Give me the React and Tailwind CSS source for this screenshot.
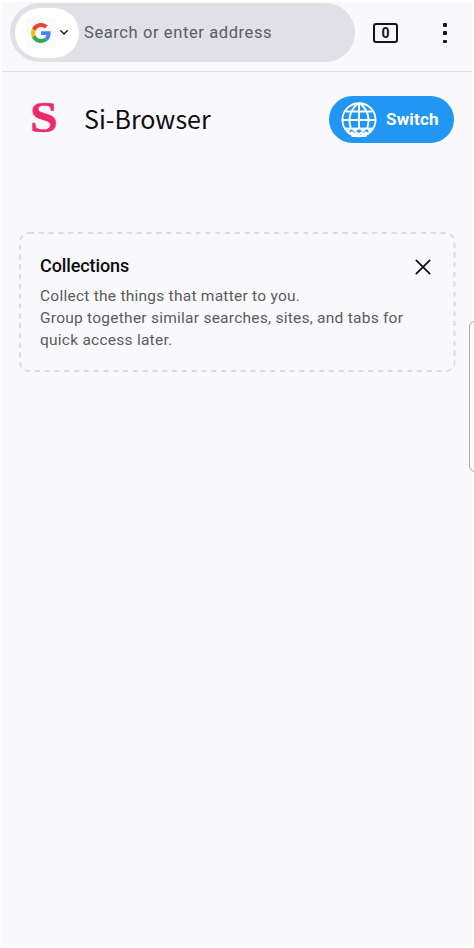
import { useState } from 'react';

const GoogleLogo = ({ className }) => (
  <svg viewBox="0 0 48 48" className={className} aria-hidden="true">
    <path fill="#EA4335" d="M24 9.5c3.54 0 6.71 1.22 9.21 3.6l6.85-6.85C35.9 2.38 30.47 0 24 0 14.62 0 6.51 5.38 2.56 13.22l7.98 6.19C12.43 13.72 17.74 9.5 24 9.5z" />
    <path fill="#4285F4" d="M46.98 24.55c0-1.57-.15-3.09-.38-4.55H24v9.02h12.94c-.58 2.96-2.26 5.48-4.78 7.18l7.73 6c4.51-4.18 7.09-10.36 7.09-17.65z" />
    <path fill="#FBBC05" d="M10.53 28.59c-.48-1.45-.76-2.99-.76-4.59s.27-3.14.76-4.59l-7.98-6.19C.92 16.46 0 20.12 0 24c0 3.88.92 7.54 2.56 10.78l7.97-6.19z" />
    <path fill="#34A853" d="M24 48c6.48 0 11.93-2.13 15.89-5.81l-7.73-6c-2.15 1.45-4.92 2.3-8.16 2.3-6.26 0-11.57-4.22-13.47-9.91l-7.98 6.19C6.51 42.62 14.62 48 24 48z" />
  </svg>
);

const GlobeLogo = ({ className }) => (
  <svg viewBox="0 0 36 36" fill="none" stroke="currentColor" strokeWidth="1.9" className={className} aria-hidden="true">
    <circle cx="18" cy="17.8" r="16.6" />
    <path d="M18 1.4V26M16.5 1.8C7.5 10 7.5 19 9.8 26M19.5 1.8C28.5 10 28.5 19 26.2 26M5 9.5h26M1.4 18h33.2" />
    {/* Small figures along the bottom of the globe */}
    <path strokeWidth="2" d="M3.5 26.6h29" />
    <path strokeWidth="2.2" d="M6.5 27.5l2 2M12 27l2 2.4 2-2.4M20 27l2 2.4 2-2.4M29.5 27.5l-2 2" />
    <path strokeWidth="2.2" d="M8 32l3-1.5 2.5 2 2.5-1.5 2 1.5 2-1.5 2.5 1.5 2.5-2 3 1.5" />
    <path strokeWidth="2" d="M10.5 34h15" />
  </svg>
);

const Toolbar = () => (
  <header className="flex h-[70px] items-start border-b-[1.5px] border-[#e2e2e5] pt-px pl-2">
    <div className="flex h-[59px] w-[345px] shrink-0 items-center rounded-full bg-[#e0e0e6] pl-[5px]">
      <button className="flex h-[50px] w-16 shrink-0 items-center rounded-full bg-white pl-[11px]" aria-label="Search engine">
        <span className="flex h-[30px] w-[30px] items-center justify-center bg-[#fafafb]">
          <GoogleLogo className="h-5 w-5" />
        </span>
        <svg viewBox="0 0 8 5" className="ml-1 h-[5px] w-2" fill="none" stroke="#15141a" strokeWidth="1.4" strokeLinecap="round" strokeLinejoin="round">
          <path d="M0.8 0.8L4 3.9L7.2 0.8" />
        </svg>
      </button>
      <span className="ml-[5px] text-[16.5px] leading-6 tracking-[0.6px] whitespace-nowrap text-[#5b5b66]">
        Search or enter address
      </span>
    </div>
    <button className="mt-5 ml-[18px] flex h-5 w-[25px] items-center justify-center rounded-[3px] border-2 border-[#15141a] text-[14px] leading-none font-bold text-[#15141a]" aria-label="Tabs">
      <span className="-mt-px">0</span>
    </button>
    <button className="mt-5 ml-[45px] flex h-5 w-1 flex-col justify-between" aria-label="Menu">
      <span className="h-[3.5px] w-[3.5px] rounded-[1px] bg-[#15141a]"></span>
      <span className="h-[3.5px] w-[3.5px] rounded-[1px] bg-[#15141a]"></span>
      <span className="h-[3.5px] w-[3.5px] rounded-[1px] bg-[#15141a]"></span>
    </button>
  </header>
);

const Brand = () => (
  <div className="mt-6 flex h-[47px] items-center pr-[18px] pl-7">
    <span className="mb-[3px] w-[54px] origin-left scale-x-[1.14] font-['Liberation_Serif',serif] text-[44px] leading-[44px] font-bold text-[#ee2a6b] [-webkit-text-stroke:0.5px_#ee2a6b]">S</span>
    <h1 className="mb-[3px] flex-1 font-['Noto_Sans_CJK_SC',sans-serif] text-[25px] leading-[44px] whitespace-nowrap text-[#0c0c10]">
      Si-Browser
    </h1>
    <button className="flex h-[47px] w-[125px] items-center rounded-full bg-[#2196f3] pl-3 text-white">
      <GlobeLogo className="h-9 w-9 shrink-0" />
      <span className="ml-[9px] text-[17px] font-bold tracking-[0.2px]">Switch</span>
    </button>
  </div>
);

const Collections = ({ onClose }) => (
  <section className="relative mt-[88px] mr-[16px] ml-4 h-[141px] pt-[23px] pr-[25px] pl-[22px]">
    <svg className="pointer-events-none absolute inset-0 h-full w-full" aria-hidden="true">
      <rect x="2" y="2" width="434.5" height="138" rx="9" fill="none" stroke="#dcdcde" strokeWidth="2" strokeDasharray="5 4.8" />
    </svg>
    <div className="flex items-center justify-between">
      <h2 className="text-[18px] leading-6 font-medium tracking-[-0.1px] text-[#0c0c10]">Collections</h2>
      <button onClick={onClose} aria-label="Close" className="mt-px">
        <svg viewBox="0 0 16 16" className="h-4 w-4" fill="none" stroke="#0c0c10" strokeWidth="1.7" strokeLinecap="round">
          <path d="M1.3 1.3L14.7 14.7M14.7 1.3L1.3 14.7" />
        </svg>
      </button>
    </div>
    <p className="mt-[7px] text-[15.5px] leading-[22.2px] tracking-[0.25px] whitespace-nowrap text-[#5b5b60]">
      Collect the things that matter to you.
      <br />
      Group together similar searches, sites, and tabs for
      <br />
      quick access later.
    </p>
  </section>
);

const App = () => {
  const [showCollections, setShowCollections] = useState(true);

  return (
    <div className="relative h-[948px] w-[474px] overflow-hidden bg-white pt-[2px] pr-[2px] pb-[3px] pl-[2px] font-[Roboto,sans-serif]">
      <div className="h-full bg-[#f9f9fb]">
        <Toolbar />
        <Brand />
        {showCollections && <Collections onClose={() => setShowCollections(false)} />}
      </div>

      {/* Edge panel handle */}
      <div className="absolute top-[321px] -right-2 h-[151px] w-[13px] rounded-[6px] border border-[#adadb0] bg-[#fbfbfc]"></div>
    </div>
  );
};

export default App;
